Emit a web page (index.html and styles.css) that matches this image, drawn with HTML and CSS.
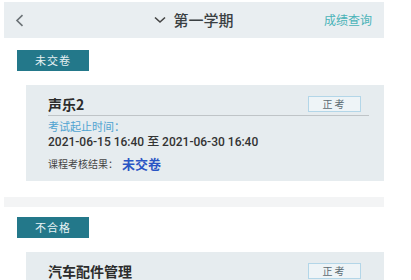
FILE: index.html
```html
<!DOCTYPE html>
<html lang="zh">
<head>
<meta charset="utf-8">
<link rel="stylesheet" href="styles.css">
</head>
<body>
<div class="page">
  <div class="header">
    <div class="back">
      <svg width="9" height="13" viewBox="0 0 9 13"><path d="M7.5 1.2 L2 6.5 L7.5 11.8" fill="none" stroke="#6b7276" stroke-width="1.6"/></svg>
    </div>
    <div class="title">
      <svg class="chev" width="12" height="8" viewBox="0 0 12 8"><path d="M1 1.5 L6 6 L11 1.5" fill="none" stroke="#444" stroke-width="1.6"/></svg>
      <span>第一学期</span>
    </div>
    <div class="link">成绩查询</div>
  </div>

  <div class="tab tab-first">未交卷</div>
  <div class="card">
    <div class="card-top">
      <div class="course">声乐2</div>
      <div class="kind">正考</div>
    </div>
    <div class="rule"></div>
    <div class="label">考试起止时间：</div>
    <div class="date">2021-06-15 16:40 至 2021-06-30 16:40</div>
    <div class="result"><span class="result-label">课程考核结果：</span><span class="result-value">未交卷</span></div>
  </div>

  <div class="band"></div>

  <div class="tab">不合格</div>
  <div class="card card-cut">
    <div class="card-top">
      <div class="course">汽车配件管理</div>
      <div class="kind">正考</div>
    </div>
  </div>
</div>
</body>
</html>
```

FILE: styles.css
```css
html, body {
  margin: 0;
  padding: 0;
  background: #ffffff;
  overflow: hidden;
}
body {
  font-family: "Noto Sans CJK SC", "Noto Sans", sans-serif;
  color: #333;
}
.page {
  width: 380px;
  margin-left: 4px;
  padding-top: 2px;
}
.header {
  height: 36px;
  background: #e9eef1;
  display: grid;
  grid-template-columns: 1fr auto 1fr;
  align-items: center;
}
.back {
  padding-left: 11px;
  display: flex;
  align-items: center;
}
.title {
  display: flex;
  align-items: center;
  font-size: 15px;
  font-weight: 500;
  color: #3a3f42;
  line-height: 20px;
}
.chev {
  margin-right: 7px;
}
.link {
  justify-self: end;
  padding-right: 12px;
  font-size: 12px;
  color: #49b3b8;
  line-height: 16px;
}
.tab {
  margin-left: 13px;
  width: 72px;
  height: 21px;
  background: #23788a;
  color: #e8f2f4;
  font-size: 11px;
  line-height: 21px;
  text-align: center;
  letter-spacing: 1px;
  margin-top: 10px;
}
.tab-first {
  margin-top: 12px;
}
.card {
  margin-top: 14px;
  margin-left: 22px;
  width: 358px;
  box-sizing: border-box;
  background: #e6ecef;
  padding: 11px 15px 10px 22px;
}
.card-cut {
  height: 40px;
}
.card-top {
  height: 16px;
  display: flex;
  justify-content: space-between;
  align-items: center;
}
.course {
  font-size: 14px;
  font-weight: 700;
  color: #2c2c2c;
  line-height: 16px;
}
.kind {
  width: 51px;
  height: 14px;
  margin-right: 8px;
  border: 1px solid #b3d6e8;
  background: #eef4f7;
  font-size: 10px;
  line-height: 14px;
  text-align: center;
  color: #5a6a72;
  letter-spacing: 2px;
}
.rule {
  margin-top: 3px;
  height: 1px;
  background: #bfc4c7;
}
.label {
  margin-top: 3px;
  font-size: 11px;
  line-height: 14px;
  color: #4fa3d1;
}
.date {
  margin-top: 1px;
  font-family: Roboto, "Noto Sans CJK SC", sans-serif;
  font-size: 12px;
  font-weight: 500;
  line-height: 16px;
  color: #333;
}
.result {
  margin-top: 5px;
  height: 16px;
  display: flex;
  align-items: center;
}
.result-label {
  font-size: 10px;
  color: #444;
  margin-right: 4px;
}
.result-value {
  font-size: 13px;
  font-weight: 700;
  color: #2a55c4;
}
.band {
  margin-top: 16px;
  height: 10px;
  background: #f3f4f5;
}
```
